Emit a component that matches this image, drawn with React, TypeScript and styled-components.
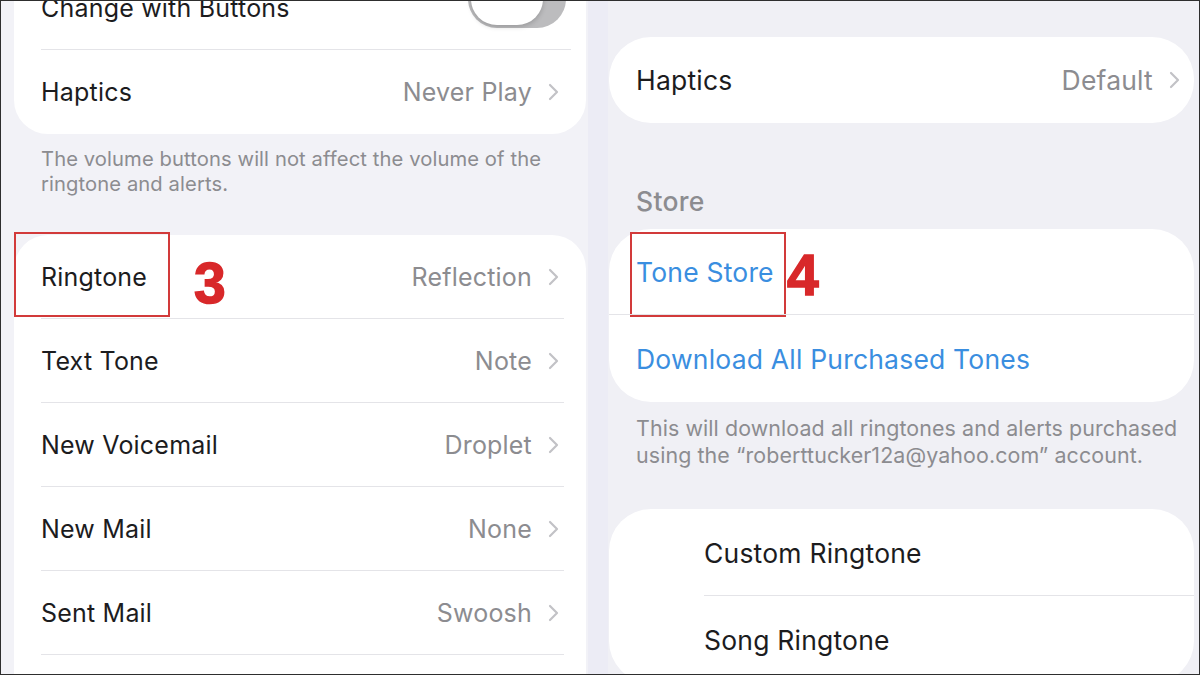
import React from "react";
import styled, { createGlobalStyle } from "styled-components";

const Global = createGlobalStyle`
  html, body { margin: 0; padding: 0; background: #f1f1f6; }
  body { font-family: Inter, "Noto Sans", "Liberation Sans", sans-serif; -webkit-font-smoothing: antialiased; }
  * { box-sizing: border-box; }
`;

const Frame = styled.div`
  width: 1200px;
  height: 675px;
  border: 1px solid #2e2e2e;
  overflow: hidden;
  display: flex;
  background: #f1f1f6;
`;

const Pane = styled.div<{ $w?: number; $pl: number; $pr: number; $bg: string }>`
  ${(p) => (p.$w ? `width: ${p.$w}px; flex: none;` : "flex: 1;")}
  padding-left: ${(p) => p.$pl}px;
  padding-right: ${(p) => p.$pr}px;
  background: ${(p) => p.$bg};
  display: flex;
  flex-direction: column;
`;

const Strip = styled.div`
  width: 20px;
  flex: none;
  background: #ececf5;
`;

const Card = styled.div<{ $mt: number; $r: number }>`
  margin-top: ${(p) => p.$mt}px;
  background: #ffffff;
  border-radius: ${(p) => p.$r}px;
  flex: none;
`;

const Row = styled.div<{ $h: number; $pl: number; $pr: number; $sep?: boolean; $sepInset?: number }>`
  position: relative;
  height: ${(p) => p.$h}px;
  display: flex;
  align-items: center;
  padding-left: ${(p) => p.$pl}px;
  padding-right: ${(p) => p.$pr}px;
  ${(p) =>
    p.$sep
      ? `&::after { content: ""; position: absolute; left: ${p.$sepInset ?? p.$pl}px; right: ${Math.max(p.$pr - 5, 0)}px; bottom: 0; height: 1.5px; background: #e4e4e8; }`
      : ""}
`;

const Label = styled.span<{ $size: number; $blue?: boolean }>`
  font-size: ${(p) => p.$size}px;
  color: ${(p) => (p.$blue ? "#3a8ee0" : "#1c1c1e")};
  letter-spacing: 0.2px;
  flex: 1;
  white-space: nowrap;
`;

const Value = styled.span<{ $size: number }>`
  font-size: ${(p) => p.$size}px;
  color: #8c8c90;
  margin-right: 16px;
  letter-spacing: 0.2px;
`;

const Footer = styled.p<{ $size: number; $lh: number; $mt: number; $pl: number }>`
  margin: ${(p) => p.$mt}px 0 0;
  padding-left: ${(p) => p.$pl}px;
  font-size: ${(p) => p.$size}px;
  line-height: ${(p) => p.$lh}px;
  color: #8c8c90;
  letter-spacing: 0.1px;
  white-space: nowrap;
`;

const SectionHeader = styled.div`
  margin-top: 61px;
  padding-left: 27px;
  height: 34px;
  font-size: 26.5px;
  line-height: 34px;
  font-weight: 500;
  color: #8c8c90;
  letter-spacing: 0.3px;
`;

const Toggle = styled.div`
  position: relative;
  width: 98px;
  height: 58px;
  margin-top: -18px;
  border-radius: 29px;
  background: #bcbcbe;
  &::before {
    content: "";
    position: absolute;
    left: 3px;
    top: 3px;
    width: 72px;
    height: 52px;
    border-radius: 26px;
    background: #fff;
    box-shadow: 0 2px 5px rgba(0, 0, 0, 0.18);
  }
`;

const Highlight = styled.div<{ $l: number; $t: number; $w: number }>`
  position: absolute;
  left: ${(p) => p.$l}px;
  top: ${(p) => p.$t}px;
  width: ${(p) => p.$w}px;
  height: 85px;
  border: 2.5px solid #d23a3a;
  pointer-events: none;
`;

const Badge = styled.span<{ $l: number; $t: number }>`
  position: absolute;
  left: ${(p) => p.$l}px;
  top: ${(p) => p.$t}px;
  font-family: "Liberation Sans", Arial, sans-serif;
  font-weight: 700;
  font-size: 57px;
  line-height: 1;
  color: #d8282a;
  -webkit-text-stroke: 1.5px #d8282a;
`;

const Chevron = () => (
  <svg width="11" height="18" viewBox="0 0 11 18" fill="none">
    <path d="M2 2l7 7-7 7" stroke="#c2c2c6" strokeWidth="2.2" strokeLinecap="round" strokeLinejoin="round" />
  </svg>
);

const leftTones: [string, string][] = [
  ["Text Tone", "Note"],
  ["New Voicemail", "Droplet"],
  ["New Mail", "None"],
  ["Sent Mail", "Swoosh"],
];

const L = 25;
const R = 26.5;

export default function App() {
  return (
    <>
      <Global />
      <Frame>
        <Pane $w={587} $pl={13} $pr={2} $bg="#f2f2f7">
          <Card $mt={-35} $r={34}>
            <Row $h={84} $pl={27} $pr={20} $sep>
              <Label $size={L}>Change with Buttons</Label>
              <Toggle />
            </Row>
            <Row $h={84} $pl={27} $pr={27}>
              <Label $size={L}>Haptics</Label>
              <Value $size={L}>Never Play</Value>
              <Chevron />
            </Row>
          </Card>
          <Footer $size={20.2} $lh={25} $mt={12} $pl={27}>
            The volume buttons will not affect the volume of the
            <br />
            ringtone and alerts.
          </Footer>
          <Card $mt={39} $r={34}>
            <Row $h={84} $pl={27} $pr={27} $sep>
              <Label $size={L}>Ringtone</Label>
              <Value $size={L}>Reflection</Value>
              <Chevron />
              <Highlight $l={0} $t={-3} $w={156} />
              <Badge $l={180} $t={20}>3</Badge>
            </Row>
            {leftTones.map(([l, v]) => (
              <Row key={l} $h={84} $pl={27} $pr={27} $sep>
                <Label $size={L}>{l}</Label>
                <Value $size={L}>{v}</Value>
                <Chevron />
              </Row>
            ))}
            <Row $h={84} $pl={27} $pr={27} />
          </Card>
        </Pane>
        <Strip />
        <Pane $pl={1} $pr={5} $bg="#f0f0f5">
          <Card $mt={36} $r={42}>
            <Row $h={86} $pl={27} $pr={14}>
              <Label $size={R}>Haptics</Label>
              <Value $size={R}>Default</Value>
              <Chevron />
            </Row>
          </Card>
          <SectionHeader>Store</SectionHeader>
          <Card $mt={11} $r={42}>
            <Row $h={86} $pl={27} $pr={0} $sep $sepInset={0}>
              <Label $size={R} $blue>Tone Store</Label>
              <Highlight $l={21} $t={3} $w={156} />
              <Badge $l={178} $t={18}>4</Badge>
            </Row>
            <Row $h={87} $pl={27} $pr={14}>
              <Label $size={R} $blue>Download All Purchased Tones</Label>
            </Row>
          </Card>
          <Footer $size={21.4} $lh={27} $mt={13} $pl={27}>
            This will download all ringtones and alerts purchased
            <br />
            using the “roberttucker12a@yahoo.com” account.
          </Footer>
          <Card $mt={40} $r={42}>
            <Row $h={87} $pl={95} $pr={0} $sep>
              <Label $size={R}>Custom Ringtone</Label>
            </Row>
            <Row $h={87} $pl={95} $pr={0}>
              <Label $size={R}>Song Ringtone</Label>
            </Row>
          </Card>
        </Pane>
      </Frame>
    </>
  );
}
